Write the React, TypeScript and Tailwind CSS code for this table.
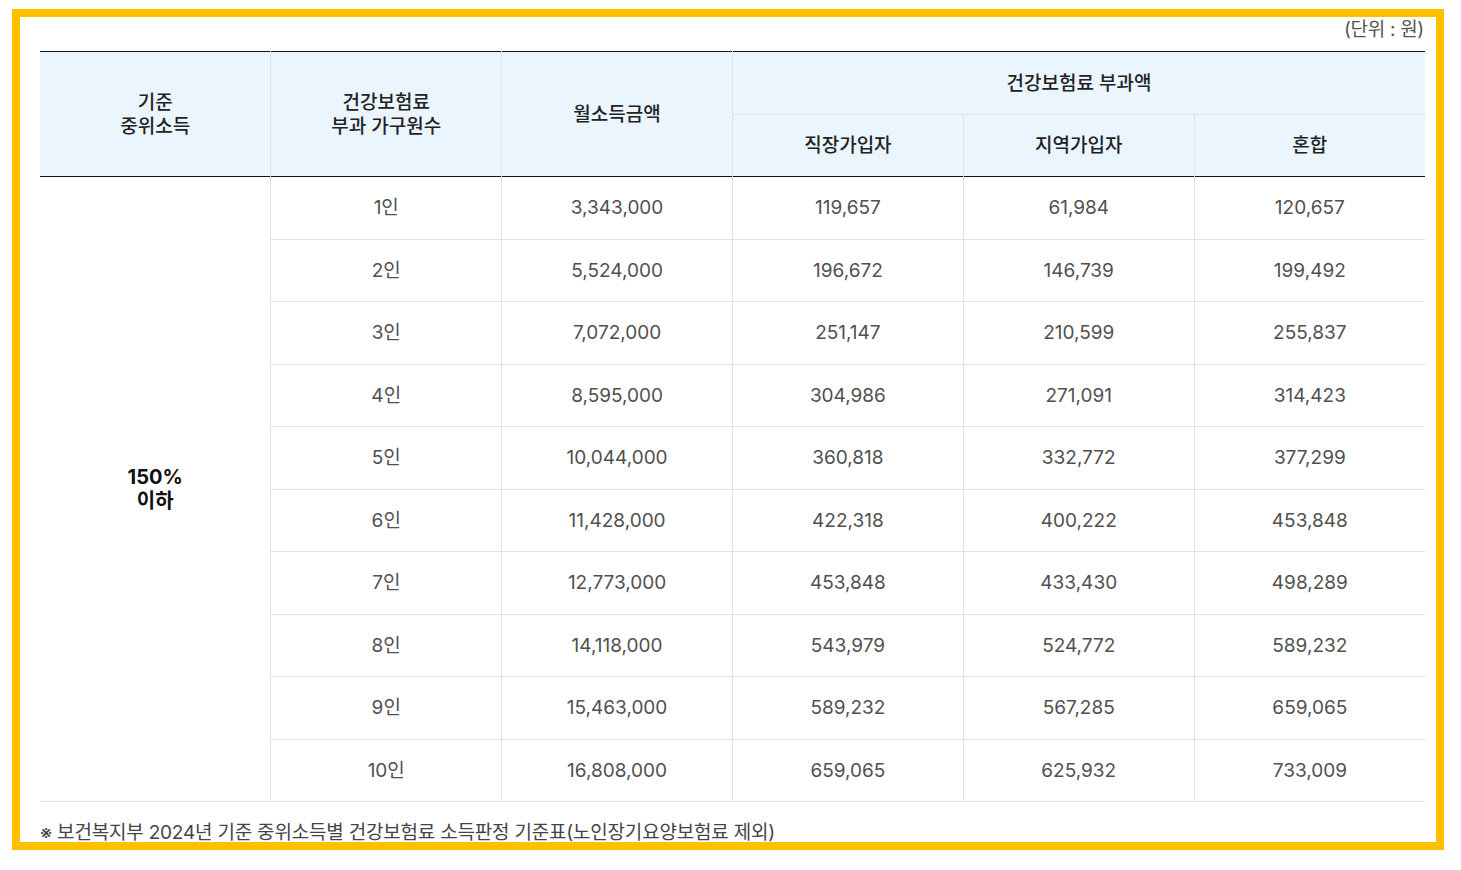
import React from "react";

const ROWS: [string, string, string, string, string][] = [
  ["1인", "3,343,000", "119,657", "61,984", "120,657"],
  ["2인", "5,524,000", "196,672", "146,739", "199,492"],
  ["3인", "7,072,000", "251,147", "210,599", "255,837"],
  ["4인", "8,595,000", "304,986", "271,091", "314,423"],
  ["5인", "10,044,000", "360,818", "332,772", "377,299"],
  ["6인", "11,428,000", "422,318", "400,222", "453,848"],
  ["7인", "12,773,000", "453,848", "433,430", "498,289"],
  ["8인", "14,118,000", "543,979", "524,772", "589,232"],
  ["9인", "15,463,000", "589,232", "567,285", "659,065"],
  ["10인", "16,808,000", "659,065", "625,932", "733,009"],
];

const FONT = { fontFamily: '"Inter", "Noto Sans CJK KR", sans-serif' };

export default function App() {
  return (
    <div className="bg-white w-[1461px] h-[870px] pt-[9px] pl-[12px]" style={FONT}>
      <div className="w-[1432px] h-[841px] border-[8px] border-[#FFC000] overflow-hidden pl-[20px] pr-[12px]">
        <div className="h-[34px] pt-[3px] flex items-start justify-end text-[19px] leading-[20px] text-[#555] tracking-[-0.3px]">
          (단위 : 원)
        </div>
        <table className="w-[1385px] border-collapse table-fixed">
          <thead>
            <tr className="h-[63px] border-t border-[#111]">
              <th rowSpan={2} className="bg-[#EBF5FE] font-medium text-[19px] text-[#222] leading-[24px] pt-[2px] border-r border-[#dde3ea]">
                기준<br />중위소득
              </th>
              <th rowSpan={2} className="bg-[#EBF5FE] font-medium text-[19px] text-[#222] leading-[24px] pt-[2px] border-r border-[#dde3ea]">
                건강보험료<br />부과 가구원수
              </th>
              <th rowSpan={2} className="bg-[#EBF5FE] font-medium text-[19px] text-[#222] pt-[2px] border-r border-[#dde3ea]">
                월소득금액
              </th>
              <th colSpan={3} className="bg-[#EBF5FE] font-medium text-[19px] text-[#222] pt-[3px] border-b border-[#dde3ea]">
                건강보험료 부과액
              </th>
            </tr>
            <tr className="h-[62px] border-b border-[#111]">
              <th className="bg-[#EBF5FE] font-medium text-[19px] text-[#222] pt-[2px] border-r border-[#dde3ea]">직장가입자</th>
              <th className="bg-[#EBF5FE] font-medium text-[19px] text-[#222] pt-[2px] border-r border-[#dde3ea]">지역가입자</th>
              <th className="bg-[#EBF5FE] font-medium text-[19px] text-[#222] pt-[2px]">혼합</th>
            </tr>
          </thead>
          <tbody>
            {ROWS.map((r, i) => (
              <tr key={r[0]} className="h-[62.5px] border-b border-[#e2e2e2]">
                {i === 0 && (
                  <td rowSpan={ROWS.length} className="text-center font-bold text-[20px] text-[#111] leading-[24px] border-r border-[#e2e2e2]">
                    150%<br />이하
                  </td>
                )}
                {r.map((v, j) => (
                  <td
                    key={j}
                    className={`text-center text-[19px] text-[#505050] pt-[1px] ${j < 4 ? "border-r border-[#e2e2e2]" : ""}`}
                  >
                    {v}
                  </td>
                ))}
              </tr>
            ))}
          </tbody>
        </table>
        <p className="mt-[19px] text-[19px] text-[#444] tracking-[-0.2px] leading-[24px]">
          ※ 보건복지부 2024년 기준 중위소득별 건강보험료 소득판정 기준표(노인장기요양보험료 제외)
        </p>
      </div>
    </div>
  );
}
